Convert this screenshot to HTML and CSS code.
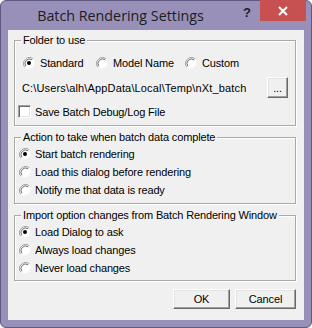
FILE: index.html
```html
<!DOCTYPE html>
<html>
<head>
<meta charset="utf-8">
<link rel="stylesheet" href="styles.css">
</head>
<body>
<div class="window">
  <div class="titlebar">
    <div class="title">Batch Rendering Settings</div>
    <div class="help">?</div>
    <div class="close">
      <svg width="10" height="10" viewBox="0 0 10 10"><path d="M1 1 L9 9 M9 1 L1 9" stroke="#fff" stroke-width="2"/></svg>
    </div>
  </div>
  <div class="client">
    <div class="group g1">
      <div class="legend">Folder to use</div>
      <div class="row opts">
        <div class="opt w1"><svg class="radio" width="12" height="12" viewBox="0 0 12 12"><circle cx="6" cy="6" r="5.5" fill="#fff"/><path d="M1.8 10.2 A6 6 0 0 1 10.2 1.8" fill="none" stroke="#a0a0a0" stroke-width="1"/><path d="M2.8 9.2 A4.6 4.6 0 0 1 9.2 2.8" fill="none" stroke="#696969" stroke-width="1"/><path d="M10.2 1.8 A6 6 0 0 1 1.8 10.2" fill="none" stroke="#f4f4f4" stroke-width="1"/><circle cx="6" cy="6" r="2" fill="#000"/></svg><span>Standard</span></div>
        <div class="opt w2"><svg class="radio" width="12" height="12" viewBox="0 0 12 12"><circle cx="6" cy="6" r="5.5" fill="#fff"/><path d="M1.8 10.2 A6 6 0 0 1 10.2 1.8" fill="none" stroke="#a0a0a0" stroke-width="1"/><path d="M2.8 9.2 A4.6 4.6 0 0 1 9.2 2.8" fill="none" stroke="#696969" stroke-width="1"/><path d="M10.2 1.8 A6 6 0 0 1 1.8 10.2" fill="none" stroke="#f4f4f4" stroke-width="1"/></svg><span>Model Name</span></div>
        <div class="opt"><svg class="radio" width="12" height="12" viewBox="0 0 12 12"><circle cx="6" cy="6" r="5.5" fill="#fff"/><path d="M1.8 10.2 A6 6 0 0 1 10.2 1.8" fill="none" stroke="#a0a0a0" stroke-width="1"/><path d="M2.8 9.2 A4.6 4.6 0 0 1 9.2 2.8" fill="none" stroke="#696969" stroke-width="1"/><path d="M10.2 1.8 A6 6 0 0 1 1.8 10.2" fill="none" stroke="#f4f4f4" stroke-width="1"/></svg><span>Custom</span></div>
      </div>
      <div class="row pathrow">
        <span class="path">C:\Users\alh\AppData\Local\Temp\nXt_batch</span>
        <button class="btn browse">...</button>
      </div>
      <div class="row checkrow">
        <span class="check"></span><span>Save Batch Debug/Log File</span>
      </div>
    </div>

    <div class="group g2">
      <div class="legend">Action to take when batch data complete</div>
      <div class="item"><svg class="radio" width="12" height="12" viewBox="0 0 12 12"><circle cx="6" cy="6" r="5.5" fill="#fff"/><path d="M1.8 10.2 A6 6 0 0 1 10.2 1.8" fill="none" stroke="#a0a0a0" stroke-width="1"/><path d="M2.8 9.2 A4.6 4.6 0 0 1 9.2 2.8" fill="none" stroke="#696969" stroke-width="1"/><path d="M10.2 1.8 A6 6 0 0 1 1.8 10.2" fill="none" stroke="#f4f4f4" stroke-width="1"/><circle cx="6" cy="6" r="2" fill="#000"/></svg><span>Start batch rendering</span></div>
      <div class="item"><svg class="radio" width="12" height="12" viewBox="0 0 12 12"><circle cx="6" cy="6" r="5.5" fill="#fff"/><path d="M1.8 10.2 A6 6 0 0 1 10.2 1.8" fill="none" stroke="#a0a0a0" stroke-width="1"/><path d="M2.8 9.2 A4.6 4.6 0 0 1 9.2 2.8" fill="none" stroke="#696969" stroke-width="1"/><path d="M10.2 1.8 A6 6 0 0 1 1.8 10.2" fill="none" stroke="#f4f4f4" stroke-width="1"/></svg><span>Load this dialog before rendering</span></div>
      <div class="item"><svg class="radio" width="12" height="12" viewBox="0 0 12 12"><circle cx="6" cy="6" r="5.5" fill="#fff"/><path d="M1.8 10.2 A6 6 0 0 1 10.2 1.8" fill="none" stroke="#a0a0a0" stroke-width="1"/><path d="M2.8 9.2 A4.6 4.6 0 0 1 9.2 2.8" fill="none" stroke="#696969" stroke-width="1"/><path d="M10.2 1.8 A6 6 0 0 1 1.8 10.2" fill="none" stroke="#f4f4f4" stroke-width="1"/></svg><span>Notify me that data is ready</span></div>
    </div>

    <div class="group g3">
      <div class="legend">Import option changes from Batch Rendering Window</div>
      <div class="item"><svg class="radio" width="12" height="12" viewBox="0 0 12 12"><circle cx="6" cy="6" r="5.5" fill="#fff"/><path d="M1.8 10.2 A6 6 0 0 1 10.2 1.8" fill="none" stroke="#a0a0a0" stroke-width="1"/><path d="M2.8 9.2 A4.6 4.6 0 0 1 9.2 2.8" fill="none" stroke="#696969" stroke-width="1"/><path d="M10.2 1.8 A6 6 0 0 1 1.8 10.2" fill="none" stroke="#f4f4f4" stroke-width="1"/><circle cx="6" cy="6" r="2" fill="#000"/></svg><span>Load Dialog to ask</span></div>
      <div class="item"><svg class="radio" width="12" height="12" viewBox="0 0 12 12"><circle cx="6" cy="6" r="5.5" fill="#fff"/><path d="M1.8 10.2 A6 6 0 0 1 10.2 1.8" fill="none" stroke="#a0a0a0" stroke-width="1"/><path d="M2.8 9.2 A4.6 4.6 0 0 1 9.2 2.8" fill="none" stroke="#696969" stroke-width="1"/><path d="M10.2 1.8 A6 6 0 0 1 1.8 10.2" fill="none" stroke="#f4f4f4" stroke-width="1"/></svg><span>Always load changes</span></div>
      <div class="item"><svg class="radio" width="12" height="12" viewBox="0 0 12 12"><circle cx="6" cy="6" r="5.5" fill="#fff"/><path d="M1.8 10.2 A6 6 0 0 1 10.2 1.8" fill="none" stroke="#a0a0a0" stroke-width="1"/><path d="M2.8 9.2 A4.6 4.6 0 0 1 9.2 2.8" fill="none" stroke="#696969" stroke-width="1"/><path d="M10.2 1.8 A6 6 0 0 1 1.8 10.2" fill="none" stroke="#f4f4f4" stroke-width="1"/></svg><span>Never load changes</span></div>
    </div>

    <div class="buttons">
      <button class="btn ok">OK</button>
      <button class="btn cancel">Cancel</button>
    </div>
  </div>
</div>
</body>
</html>
```

FILE: styles.css
```css
* { box-sizing: border-box; }
html, body { margin: 0; padding: 0; background: #ffffff; }
body { width: 312px; height: 328px; overflow: hidden; }

.window {
  width: 312px;
  height: 328px;
  background: #9890b9;
  border: 1px solid #5f5880;
  border-radius: 6px 6px 6px 6px;
  display: flex;
  flex-direction: column;
}

.titlebar {
  height: 29px;
  display: flex;
  align-items: flex-start;
}
.title {
  flex: 1;
  text-align: center;
  padding-left: 6px;
  padding-top: 6px;
  font-family: "Open Sans", "Noto Sans", sans-serif;
  font-size: 14.3px;
  line-height: 18px;
  color: #1c1c24;
}
.help {
  width: 26px;
  padding-top: 5px;
  text-align: center;
  font-family: "Liberation Sans", Arial, sans-serif;
  font-weight: bold;
  font-size: 13px;
  line-height: 14px;
  color: #1c1c24;
}
.close {
  width: 46px;
  height: 21px;
  margin-top: -1px;
  margin-right: 5px;
  background: #c75050;
  display: flex;
  align-items: center;
  justify-content: center;
}
.close svg { display: block; }

.client {
  margin: 0 7px;
  height: 290px;
  background: #f0f0f0;
  padding: 10px 8px 0 6px;
  font-family: "Liberation Sans", Arial, sans-serif;
  font-size: 11px;
  letter-spacing: -0.15px;
  color: #000;
}

.group {
  position: relative;
  border: 1px solid #a9a9a9;
  box-shadow: inset 1px 1px 0 #ffffff, 1px 1px 0 #ffffff;
}
.legend {
  position: absolute;
  top: -7px;
  left: 6px;
  padding: 0 2px;
  line-height: 13px;
  background: #f0f0f0;
  white-space: nowrap;
}

.g1 { padding: 13px 7px 6px 0; }
.row { display: flex; align-items: center; }
.opts { height: 17px; padding-left: 8px; }
.opt { display: flex; align-items: center; }
.opt .radio { margin-right: 5px; }
.w1 { width: 73px; }
.w2 { width: 89px; }

.pathrow { height: 21px; margin-top: 6px; padding-left: 7px; }
.path { flex: 1; white-space: nowrap; letter-spacing: 0.15px; }

.checkrow { height: 15px; margin-top: 6px; padding-left: 3px; }
.check {
  width: 13px;
  height: 13px;
  background: #fff;
  border: 1px solid;
  border-color: #a0a0a0 #ffffff #ffffff #a0a0a0;
  box-shadow: inset 1px 1px 0 #696969, inset -1px -1px 0 #e3e3e3;
  margin-right: 4px;
}

.radio { display: block; flex: none; }

.g2 { margin-top: 11px; padding: 7px 0 4px 4px; }
.g3 { margin-top: 11px; padding: 7px 0 3px 4px; }
.item { display: flex; align-items: center; height: 18px; }
.item .radio { margin-right: 4px; }

.btn {
  font-family: "Liberation Sans", Arial, sans-serif;
  font-size: 11px;
  letter-spacing: -0.15px;
  color: #000;
  background: #f0f0f0;
  border: 1px solid;
  border-color: #ffffff #696969 #696969 #ffffff;
  box-shadow: inset -1px -1px 0 #a0a0a0, inset 1px 1px 0 #e3e3e3;
  padding: 0;
  margin: 0;
}
.browse { width: 21px; height: 21px; line-height: 14px; }

.buttons {
  display: flex;
  justify-content: flex-end;
  gap: 5px;
  margin-top: 8px;
}
.ok { width: 57px; height: 20px; }
.cancel { width: 61px; height: 20px; }
```
